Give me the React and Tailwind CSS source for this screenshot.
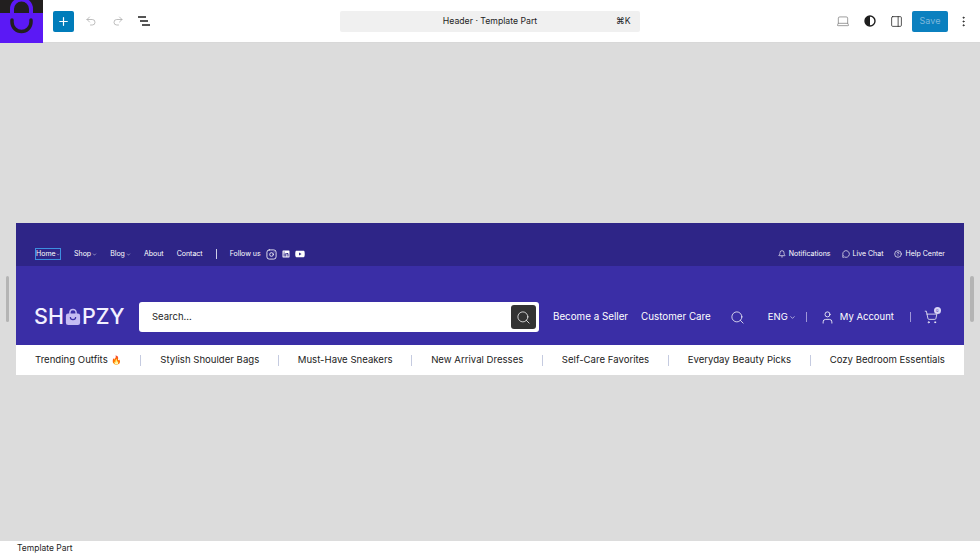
import { ChevronDown, Bell, MessageCircle, CircleHelp, Search, User, ShoppingCart, Instagram, Plus, Undo2, Redo2, Laptop, PanelRight, EllipsisVertical } from 'lucide-react'
import { FaLinkedin, FaYoutube } from 'react-icons/fa'

const topLinks = [
  { label: 'Home', caret: true, active: true },
  { label: 'Shop', caret: true },
  { label: 'Blog', caret: true },
  { label: 'About' },
  { label: 'Contact' },
]

const categories = ['Stylish Shoulder Bags', 'Must-Have Sneakers', 'New Arrival Dresses', 'Self-Care Favorites', 'Everyday Beauty Picks', 'Cozy Bedroom Essentials']

function Logo() {
  return (
    <div className="h-[43px] w-[43px] shrink-0 overflow-hidden bg-[#5b19f5]">
      <svg viewBox="0 0 43 43" className="h-[43px] w-[43px]">
        <rect width="43" height="13" fill="#221f1f" />
        <path d="M12 13 V9 a9.5 9.5 0 0 1 19 0 V13" fill="none" stroke="#5b19f5" strokeWidth="4" />
        <path d="M12 20 V22 a9.5 9.5 0 0 0 19 0 V20" fill="none" stroke="#221f1f" strokeWidth="3.5" strokeLinecap="round" />
      </svg>
    </div>
  )
}

function Toolbar() {
  return (
    <div className="flex h-[43px] items-center border-b border-[#d8d8d8] bg-white">
      <Logo />
      <button className="ml-[10px] flex h-[21px] w-[21px] items-center justify-center rounded-[2px] bg-[#007cba] text-white">
        <Plus size={13} strokeWidth={2.2} />
      </button>
      <Undo2 size={12} strokeWidth={1.5} className="ml-[11px] text-[#a8a8a8]" />
      <Redo2 size={12} strokeWidth={1.5} className="ml-[15px] text-[#a8a8a8]" />
      {/* list view */}
      <svg viewBox="0 0 12 10" className="ml-[14px] h-[10px] w-[12px]" stroke="#1e1e1e" strokeWidth="1.3">
        <path d="M0 1 H8 M2 5 H10 M4 9 H12" />
      </svg>
      <div className="ml-[190px] flex h-[21px] w-[300px] items-center rounded-[2px] bg-[#f0f0f0] pr-[9px] pt-[1px] text-[8.7px] text-[#1e1e1e]">
        <span className="w-[15px]" />
        <span className="flex-1 pl-[9px] text-center">Header · Template Part</span>
        <span className="w-[15px] whitespace-nowrap">⌘K</span>
      </div>
      <div className="ml-auto flex items-center pr-[10px]">
        <Laptop size={14} strokeWidth={1.2} className="text-[#757575]" />
        <svg viewBox="0 0 12 12" className="ml-[14px] h-[12px] w-[12px]">
          <circle cx="6" cy="6" r="5" fill="none" stroke="#1e1e1e" strokeWidth="1.4" />
          <path d="M6 1 a5 5 0 0 0 0 10 z" fill="#1e1e1e" />
        </svg>
        <PanelRight size={13} strokeWidth={1.4} className="ml-[14px] text-[#1e1e1e]" />
        <button className="ml-[9px] h-[21px] w-[36px] rounded-[2px] bg-[#0b80bf] text-[9px] text-[#7fb8dc]">Save</button>
        <EllipsisVertical size={13} strokeWidth={1.6} className="ml-[9px] text-[#1e1e1e]" />
      </div>
    </div>
  )
}

function TopBar() {
  return (
    <div className="flex h-[43px] items-center whitespace-nowrap bg-[#2e2587] px-[19px] pt-[19px] text-[7px] text-white">
      <div className="flex items-center gap-[13px]">
        {topLinks.map((l) => (
          <span key={l.label} className={l.active ? 'flex w-[26px] items-center border border-[#3d8fe0]' : 'flex items-center gap-[1px]'}>
            {l.label}
            {l.caret && <ChevronDown size={5} strokeWidth={2} />}
          </span>
        ))}
      </div>
      <span className="ml-[13px] mr-[13px] h-[10px] w-px bg-[#cfcfe8]" />
      <span>Follow us</span>
      <div className="ml-[5px] flex items-center gap-[5px]">
        <Instagram size={11} strokeWidth={1.8} />
        <FaLinkedin size={8} />
        <FaYoutube size={10} />
      </div>
      <div className="ml-auto flex items-center gap-[11px]">
        <span className="flex items-center gap-[3px]"><Bell size={8} />Notifications</span>
        <span className="flex items-center gap-[3px]"><MessageCircle size={8} />Live Chat</span>
        <span className="flex items-center gap-[3px]"><CircleHelp size={8} />Help Center</span>
      </div>
    </div>
  )
}

function MainBar() {
  return (
    <div className="flex h-[79px] items-center whitespace-nowrap bg-[#3a2ea6] pl-[18px] pr-[19px] pt-[23px] text-white">
      <div className="flex w-[105px] shrink-0 items-center text-[21.5px] font-medium leading-none text-[#f2f0ff]">
        <span>SH</span>
        <svg viewBox="0 0 18 20" className="mx-[1px] h-[18px] w-[16px]">
          <path d="M5.5 7 V5 a3.5 3.5 0 0 1 7 0 V7" fill="none" stroke="#c4bbf3" strokeWidth="1.6" />
          <rect x="1" y="6" width="16" height="13" rx="2.5" fill="#c4bbf3" />
          <path d="M6 10 a3 3 0 0 0 6 0" fill="none" stroke="#3a2ea6" strokeWidth="1.3" />
        </svg>
        <span>PZY</span>
      </div>
      <div className="flex h-[30px] w-[400px] shrink-0 items-center justify-between rounded-[3px] bg-white pl-[13px] pr-[3px] text-[9.5px] text-[#1e1e1e]">
        <span>Search...</span>
        <span className="flex h-[24px] w-[25px] items-center justify-center rounded-[3px] bg-[#333333] text-white">
          <Search size={15} strokeWidth={1.2} />
        </span>
      </div>
      <span className="ml-[14px] text-[9.8px]">Become a Seller</span>
      <span className="ml-[13px] text-[9.8px]">Customer Care</span>
      <Search size={15} strokeWidth={1.2} className="ml-[19px]" />
      <span className="ml-[23px] flex items-center gap-[1px] text-[9.5px]">ENG<ChevronDown size={7} strokeWidth={2} /></span>
      <span className="ml-[10px] h-[10px] w-px bg-[#9f97d8]" />
      <User size={15} strokeWidth={1.3} className="ml-[13px]" />
      <span className="ml-[5px] text-[9.5px]">My Account</span>
      <span className="ml-[16px] h-[10px] w-px bg-[#9f97d8]" />
      <div className="relative ml-[13px]">
        <ShoppingCart size={14} strokeWidth={1.3} />
        <span className="absolute -right-[3px] -top-[3px] flex h-[7px] w-[7px] items-center justify-center rounded-full bg-[#d8d4f5] text-[4px] text-[#3a2ea6]">0</span>
      </div>
    </div>
  )
}

function CategoryBar() {
  return (
    <div className="flex h-[30px] items-center justify-between whitespace-nowrap bg-white px-[19px] text-[9.6px] text-[#222222]">
      <span className="flex items-center gap-[3px]">Trending Outfits <span className="text-[8.5px]">🔥</span></span>
      {categories.map((c) => (
        <div key={c} className="contents">
          <span className="h-[11px] w-px bg-[#c5cbe0]" />
          <span>{c}</span>
        </div>
      ))}
    </div>
  )
}

export default function App() {
  return (
    <div className="flex h-[556px] w-[980px] flex-col overflow-hidden bg-white font-['Inter',sans-serif]">
      <Toolbar />
      <div className="flex flex-1 items-center bg-[#dcdcdc] pl-[6px] pt-[14px]">
        <div className="h-[46px] w-[3px] shrink-0 rounded-full bg-[#b4b4b4]" />
        <div className="ml-[7px] w-[948px] shrink-0">
          <TopBar />
          <MainBar />
          <CategoryBar />
        </div>
        <div className="ml-[6px] h-[46px] w-[4px] shrink-0 rounded-full bg-[#b4b4b4]" />
      </div>
      <div className="flex h-[15px] items-center bg-white pl-[17px] text-[8.5px] text-[#1e1e1e]">Template Part</div>
    </div>
  )
}
